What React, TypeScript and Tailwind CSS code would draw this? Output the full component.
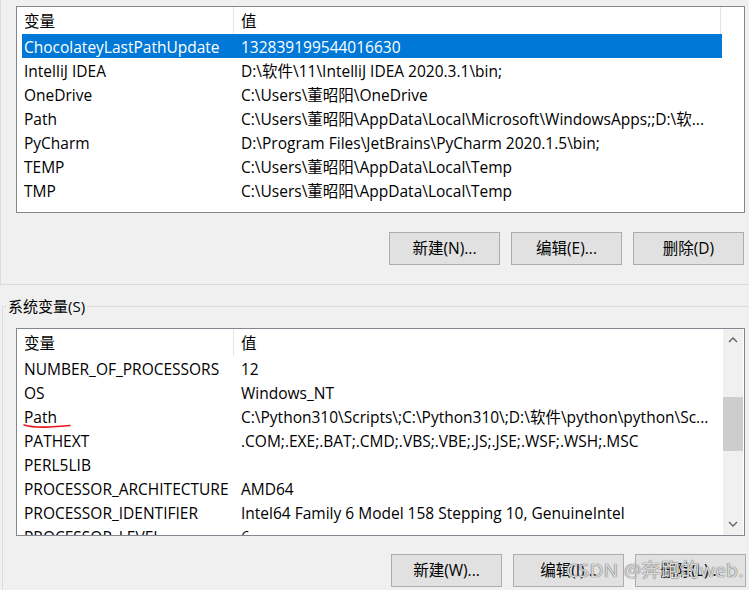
import React from 'react';

type Row = { name: string; value: string };

const userRows: Row[] = [
  { name: 'ChocolateyLastPathUpdate', value: '132839199544016630' },
  { name: 'IntelliJ IDEA', value: 'D:\\软件\\11\\IntelliJ IDEA 2020.3.1\\bin;' },
  { name: 'OneDrive', value: 'C:\\Users\\董昭阳\\OneDrive' },
  { name: 'Path', value: 'C:\\Users\\董昭阳\\AppData\\Local\\Microsoft\\WindowsApps;;D:\\软...' },
  { name: 'PyCharm', value: 'D:\\Program Files\\JetBrains\\PyCharm 2020.1.5\\bin;' },
  { name: 'TEMP', value: 'C:\\Users\\董昭阳\\AppData\\Local\\Temp' },
  { name: 'TMP', value: 'C:\\Users\\董昭阳\\AppData\\Local\\Temp' },
];

const systemRows: Row[] = [
  { name: 'NUMBER_OF_PROCESSORS', value: '12' },
  { name: 'OS', value: 'Windows_NT' },
  { name: 'Path', value: 'C:\\Python310\\Scripts\\;C:\\Python310\\;D:\\软件\\python\\python\\Sc...' },
  { name: 'PATHEXT', value: '.COM;.EXE;.BAT;.CMD;.VBS;.VBE;.JS;.JSE;.WSF;.WSH;.MSC' },
  { name: 'PERL5LIB', value: '' },
  { name: 'PROCESSOR_ARCHITECTURE', value: 'AMD64' },
  { name: 'PROCESSOR_IDENTIFIER', value: 'Intel64 Family 6 Model 158 Stepping 10, GenuineIntel' },
  { name: 'PROCESSOR_LEVEL', value: '6' },
];

// header row with the two column titles
function Header({ lastSep }: { lastSep?: boolean }) {
  return (
    <div className="flex h-[27px] pl-[5px] shrink-0 leading-[24px]">
      <div className="w-[212px] pl-[2px] pt-[2px] border-r border-[#e5e5e5] h-full">变量</div>
      <div
        className={
          'w-[487px] pl-[7px] pt-[2px] h-full ' + (lastSep ? 'border-r border-[#e5e5e5]' : '')
        }
      >
        值
      </div>
    </div>
  );
}

function ListRow({ row, selected, mark }: { row: Row; selected?: boolean; mark?: boolean }) {
  return (
    <div
      className={
        'flex h-[24px] pt-[2px] leading-[22px] ml-[5px] w-[700px] shrink-0 whitespace-nowrap ' +
        (selected ? 'bg-[#0078d7] text-white' : 'text-black')
      }
    >
      <div className="w-[212px] pl-[2px] overflow-hidden relative">
        {row.name}
        {mark && (
          <svg className="absolute left-[1px] top-[17px]" width="50" height="6" viewBox="0 0 50 6">
            <path d="M1 2 C 8 4, 16 4.5, 26 4 S 42 3, 47 2.5" fill="none" stroke="#e8141c" strokeWidth="1.6" strokeLinecap="round" />
          </svg>
        )}
      </div>
      <div className="w-[488px] pl-[7px] overflow-hidden">{row.value}</div>
    </div>
  );
}

function Button({ label }: { label: string }) {
  return (
    <div className="w-[111px] h-[33px] bg-[#e1e1e1] border border-[#adadad] flex items-center justify-center text-black">
      {label}
    </div>
  );
}

function ScrollBar() {
  return (
    <div className="w-[20px] mr-[1px] bg-[#f0f0f0] flex flex-col items-center shrink-0">
      <div className="h-[22px] w-full flex items-center justify-center">
        <svg width="10" height="6" viewBox="0 0 10 6">
          <path d="M1 5 L5 1 L9 5" fill="none" stroke="#606060" strokeWidth="1.3" />
        </svg>
      </div>
      <div className="h-[46px]" />
      <div className="h-[54px] w-full bg-[#cdcdcd]" />
      <div className="flex-1" />
      <div className="h-[22px] w-full flex items-center justify-center">
        <svg width="10" height="6" viewBox="0 0 10 6">
          <path d="M1 1 L5 5 L9 1" fill="none" stroke="#606060" strokeWidth="1.3" />
        </svg>
      </div>
    </div>
  );
}

export default function App() {
  return (
    <div
      className="w-[749px] h-[590px] bg-[#f0f0f0] overflow-hidden relative text-[15.5px] leading-none text-black"
      style={{ fontFamily: '"Open Sans", "Noto Sans CJK SC", sans-serif' }}
    >
      {/* user variables group */}
      <div className="h-[285px] border-l border-b border-[#dcdcdc] flex flex-col">
        <div className="ml-[15px] mt-[6px] w-[729px] h-[207px] bg-white border border-[#828790] flex flex-col overflow-hidden">
          <Header lastSep />
          {userRows.map((r, i) => (
            <ListRow key={r.name} row={r} selected={i === 0} />
          ))}
        </div>
        <div className="flex justify-end gap-[11px] mt-[19px] pr-[5px]">
          <Button label="新建(N)..." />
          <Button label="编辑(E)..." />
          <Button label="删除(D)" />
        </div>
      </div>

      {/* system variables group */}
      <div className="mt-[21px] ml-[2px] border-l border-t border-[#dcdcdc] relative h-[300px]">
        <div className="absolute left-[3px] top-[-8px] px-[2px] bg-[#f0f0f0] text-[15px]">系统变量(S)</div>
        <div className="ml-[13px] mt-[21px] w-[729px] h-[208px] bg-white border border-[#828790] flex overflow-hidden">
          <div className="flex flex-col flex-1 overflow-hidden">
            <Header />
            {systemRows.map((r) => (
              <ListRow key={r.name} row={r} mark={r.name === 'Path'} />
            ))}
          </div>
          <ScrollBar />
        </div>
        <div className="flex justify-end gap-[11px] mt-[18px] pr-[3px]">
          <Button label="新建(W)..." />
          <Button label="编辑(I)..." />
          <Button label="删除(L)..." />
        </div>
      </div>

      <div className="absolute left-[566px] top-[561px] text-[19px] text-white/75 tracking-[0.5px] [text-shadow:0_0_1px_#666,0_0_1px_#666]">
        CSDN @奔跑的web.
      </div>
    </div>
  );
}
